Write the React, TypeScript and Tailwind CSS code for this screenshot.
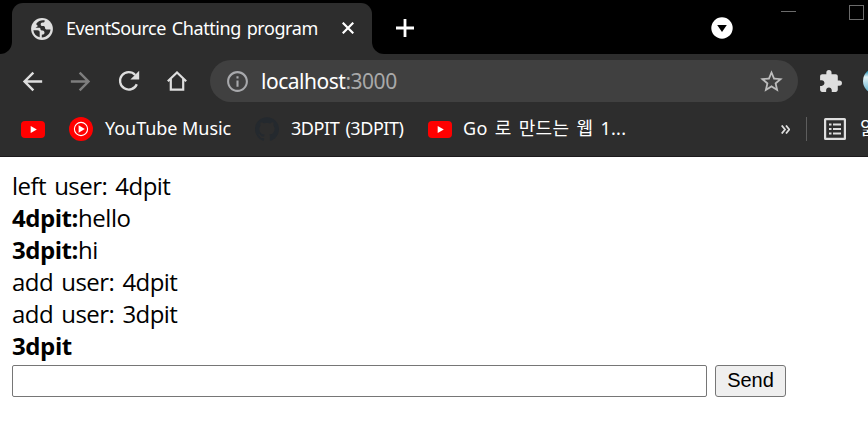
import React from 'react';
import { MdArrowBack, MdArrowForward, MdExtension, MdStarBorder, MdInfoOutline } from 'react-icons/md';
import { SiGithub } from 'react-icons/si';

function Globe() {
  return (
    <svg className="size-[22px] shrink-0" viewBox="0 0 22 22">
      <circle cx="11" cy="11" r="10.900" fill="#dedede" />
      <path d="M13.800 2.400c-.1 1.700-.8 2.200-2.300 2.200-1.300 0-1.800.8-1.800 1.900 0 1 .8 1.500 2 1.500 1.800 0 2.300.7 2.300 1.700s.7 1.800 2 1.800h3.500c-.3 4-3.500 7.600-8.700 8v-2.700c1.800 0 2.700-.7 2.700-2.200 0-1.700-1-2.200-2.600-2.200-1.200 0-1.500-.8-1.500-1.600 0-.7-.5-1-1.500-1H4.500L7 8C5.500 7.300 5 6.300 5.600 5.300 7.500 3 10.500 1.700 13.800 2.400z" fill="#2d2d2d" />
      <path d="M2.400 12.200h4c1.700 0 2.300 1 2.300 2.200v4.900C5 18.400 2.700 15.800 2.400 12.200z" fill="#2d2d2d" />
    </svg>
  );
}

function Reload() {
  return (
    <svg className="size-[22px] shrink-0" viewBox="0 0 22 22" fill="none">
      <path d="M18.800 14.200A8.700 8.700 0 1 1 17.200 5" stroke="#dedede" strokeWidth="2.300" />
      <path d="M21.200.8v8.800h-8.800z" fill="#dedede" />
    </svg>
  );
}

function Home() {
  return (
    <svg className="size-5 shrink-0" viewBox="0 0 20 20" fill="none" stroke="#dedede" strokeWidth="2.200">
      <path d="M.8 10.200 10 1.500l9.200 8.700M3.800 8v10.700h12.400V8" />
    </svg>
  );
}

function YouTube() {
  return (
    <svg className="h-[17px] w-6 shrink-0" viewBox="0 0 24 17">
      <rect width="24" height="17" rx="4" fill="#f00" />
      <path d="m9.700 4.900 6.100 3.600-6.100 3.600z" fill="#fff" />
    </svg>
  );
}

function YouTubeMusic() {
  return (
    <svg className="size-6 shrink-0" viewBox="0 0 24 24">
      <circle cx="12" cy="12" r="12" fill="#f00" />
      <circle cx="12" cy="12" r="6.600" fill="none" stroke="#fff" strokeWidth="1.100" />
      <path d="m9.600 8.300 6.200 3.700-6.200 3.700z" fill="#fff" />
    </svg>
  );
}

function ReadingList() {
  return (
    <svg className="size-[22px] shrink-0" viewBox="0 0 22 22" fill="#dedede">
      <path fillRule="evenodd" d="M1.500 0h19A1.500 1.500 0 0 1 22 1.500v19a1.500 1.500 0 0 1-1.500 1.500h-19A1.500 1.500 0 0 1 0 20.500v-19A1.500 1.500 0 0 1 1.500 0zM2.200 2.200v17.600h17.600V2.200z" />
      <path d="M5 5.500h2.500v2H5zM9 5.500h8v2H9zM5 10h2.500v2H5zM9 10h8v2H9zM5 14.500h2.500v2H5zM9 14.500h8v2H9z" />
    </svg>
  );
}

function TabStrip() {
  return (
    <div className="flex h-[54px] bg-black">
      <div className="flex w-3 items-end bg-[#2d2d2d]">
        <div className="h-full w-full rounded-br-[12px] bg-black" />
      </div>
      <div className="flex w-[360px] flex-col">
        <div className="h-[3px]" />
        <div className="flex h-[51px] items-center rounded-t-[11px] bg-[#2d2d2d] pl-[19px]">
          <Globe />
          <span className="-mt-0.5 ml-[13px] w-[260px] whitespace-nowrap text-[18px] leading-6 tracking-[-0.420px] [word-spacing:1.500px] text-white">EventSource Chatting program</span>
          <svg className="-mt-px ml-4 size-3 shrink-0" viewBox="0 0 12 12" stroke="#fff" strokeWidth="2.200" fill="none"><path d="m.7.7 10.600 10.600M11.300.7.7 11.300" /></svg>
        </div>
      </div>
      <div className="flex flex-1 bg-[#2d2d2d]">
        <div className="flex flex-1 rounded-bl-[12px] bg-black">
          <svg className="ml-6 mt-[19px] size-[18px] shrink-0" viewBox="0 0 18 18" stroke="#fff" strokeWidth="2.800"><path d="M9 0v18M0 9h18" /></svg>
          <svg className="ml-[297px] mt-[17px] size-[22px] shrink-0" viewBox="0 0 22 22"><circle cx="11" cy="11" r="10.700" fill="#fff" /><path d="M6.200 8h9.600L11 15z" fill="#000" /></svg>
          <div className="ml-12 mt-[11px] h-px w-[15px] shrink-0 bg-[#6b6b6b]" />
          <div className="ml-[53px] mt-[5px] size-[15px] shrink-0 border border-[#6b6b6b]" />
        </div>
      </div>
    </div>
  );
}

function Toolbar() {
  return (
    <div className="flex h-12 items-center overflow-hidden pt-[6px]">
      <MdArrowBack className="ml-[18px] size-[29px] shrink-0 text-[#dedede]" />
      <MdArrowForward className="ml-[19px] size-[29px] shrink-0 text-[#7e7e7e]" />
      <div className="ml-[23px]"><Reload /></div>
      <div className="ml-[27px]"><Home /></div>
      <div className="ml-[23px] flex h-[42px] w-[588px] shrink-0 items-center rounded-full bg-[#404040]">
        <MdInfoOutline className="ml-[15px] size-[25px] shrink-0 text-[#a8a9ac]" />
        <span className="ml-[11px] whitespace-nowrap text-[21px] leading-7 tracking-[-0.480px] text-white">localhost<span className="text-[#a9a9a9]">:3000</span></span>
        <MdStarBorder className="ml-auto mr-[13.500px] size-[27px] text-[#bcbcbc]" />
      </div>
      <MdExtension className="ml-5 size-[25px] shrink-0 text-[#dedede]" />
      <div className="ml-[20px] size-[26px] shrink-0 rounded-full bg-linear-to-b from-[#2b9cbc] from-15% via-[#e4f4f7] via-35% to-[#49aacb]" />
    </div>
  );
}

function Bookmarks() {
  return (
    <div className="flex h-[54px] items-center overflow-hidden whitespace-nowrap pl-[21px] text-[18px] leading-6 text-white">
      <YouTube />
      <div className="ml-6 shrink-0"><YouTubeMusic /></div>
      <span className="-mt-0.5 ml-3 w-[127px] shrink-0 tracking-[-0.050px]">YouTube Music</span>
      <SiGithub className="ml-[23px] size-6 shrink-0 text-[#24292e]" />
      <span className="-mt-0.5 ml-3 w-[114px] shrink-0 tracking-[-0.450px] [word-spacing:2px]">3DPIT (3DPIT)</span>
      <div className="ml-[23px] flex shrink-0"><YouTube /></div>
      <span className="-mt-0.5 ml-[11px] w-[165px] shrink-0 tracking-[0.280px] [word-spacing:2.200px]">Go 로 만드는 웹 1...</span>
      <svg className="ml-[153px] size-[9px] shrink-0" viewBox="0 0 9 9" fill="none" stroke="#dedede" strokeWidth="1.800"><path d="M.7.5 4 4.500l-3.300 4M5 .5l3.300 4L5 8.500" /></svg>
      <div className="ml-4 h-6 w-px shrink-0 bg-[#5d5d5d]" />
      <div className="ml-[17px] shrink-0"><ReadingList /></div>
      <span className="-mt-0.5 ml-[14px] shrink-0">읽</span>
    </div>
  );
}

export default function App() {
  return (
    <div className="h-[434px] w-[868px] overflow-hidden bg-white font-['Noto_Sans','Noto_Sans_CJK_KR',sans-serif]">
      <TabStrip />
      <div className="h-[103px] border-b border-[#1c1a1c] bg-[#2d2d2d]">
        <Toolbar />
        <Bookmarks />
      </div>
      <main className="px-3 pt-[13px] font-['Open_Sans','Noto_Sans_CJK_KR',sans-serif] text-[24px] leading-8 text-black">
        <div className="tracking-[-0.550px] [word-spacing:2.500px]">left user: 4dpit</div>
        <div className="tracking-[-0.450px]"><b>4dpit:</b>hello</div>
        <div className="tracking-[-0.450px]"><b>3dpit:</b>hi</div>
        <div className="tracking-[-0.550px] [word-spacing:2.500px]">add user: 4dpit</div>
        <div className="tracking-[-0.550px] [word-spacing:2.500px]">add user: 3dpit</div>
        <div className="tracking-[-0.400px]"><b>3dpit</b></div>
        <form className="mt-[3px] flex gap-2" onSubmit={(e) => e.preventDefault()}>
          <input aria-label="Message" className="h-8 w-[695px] rounded-[2px] border border-[#767676] px-1 text-[20px] outline-none" />
          <button className="h-8 w-[71px] rounded-[3px] border border-[#767676] bg-[#efefef] pb-0.5 font-['Liberation_Sans',Arial,sans-serif] text-[20px] leading-7">Send</button>
        </form>
      </main>
    </div>
  );
}
